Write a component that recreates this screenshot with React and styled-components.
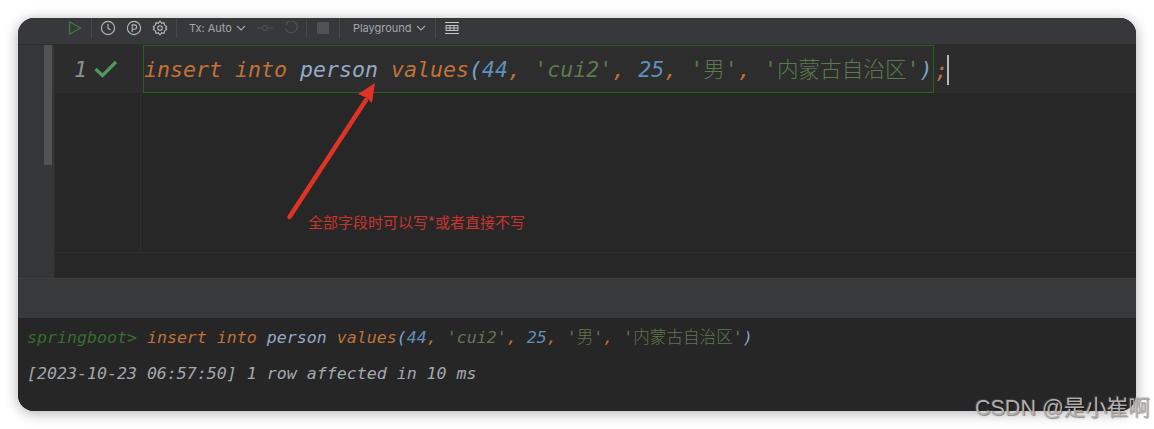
import React from "react";
import styled, { createGlobalStyle } from "styled-components";

const GlobalStyle = createGlobalStyle`
  html, body {
    margin: 0;
    background: #fff;
  }
`;

const MONO = `"DejaVu Sans Mono", "Noto Sans CJK SC", monospace`;

const Page = styled.div`
  position: relative;
  width: 1154px;
  height: 429px;
  padding: 18px;
  box-sizing: border-box;
  overflow: hidden;
  background: #fff;
`;

const Win = styled.div`
  position: relative;
  height: 393px;
  border-radius: 16px;
  overflow: hidden;
  display: flex;
  flex-direction: column;
  background: #262626;
  box-shadow: 0 2px 14px rgba(0, 0, 0, 0.32);
`;

const Toolbar = styled.div`
  height: 26px;
  flex: none;
  display: flex;
  align-items: center;
  padding: 0 0 6px 49px;
  box-sizing: border-box;
  background: #37383b;
  color: #a0a7ae;
  font: 11px "Inter", "Noto Sans", sans-serif;
`;

const Divider = styled.span`
  width: 1px;
  height: 20px;
  flex: none;
  background: #47484b;
  margin: ${(p) => p.$m || "0 9px"};
`;

const ToolIcon = styled.svg`
  flex: none;
  margin: ${(p) => p.$m || "0"};
  display: block;
`;

const ToolText = styled.span`
  margin: ${(p) => p.$m || "0"};
  white-space: nowrap;
`;

const StopBox = styled.span`
  width: 12px;
  height: 12px;
  flex: none;
  border-radius: 1px;
  background: #505153;
`;

const Editor = styled.div`
  height: 233px;
  flex: none;
  display: flex;
  background: #272727;
  border-top: 1px solid #2e2e30;
`;

const SideStrip = styled.div`
  width: 37px;
  flex: none;
  display: flex;
  justify-content: flex-end;
  padding-right: 2px;
  box-sizing: border-box;
  background: #353638;
  border-right: 1px solid #2d2d2e;
`;

const ScrollThumb = styled.div`
  width: 8px;
  height: 120px;
  background: #515253;
`;

const Code = styled.div`
  flex: 1;
  min-width: 0;
  display: flex;
  flex-direction: column;
`;

const LineRow = styled.div`
  height: 48px;
  flex: none;
  display: flex;
  align-items: center;
  background: #2c2c2c;
  font: italic 21.6px ${MONO};
  white-space: pre;
`;

const Gutter = styled.div`
  width: 86px;
  flex: none;
  display: flex;
  align-items: center;
  padding-left: 19px;
  box-sizing: border-box;
  color: #8d9092;
`;

const Check = styled.svg`
  margin-left: 7px;
  flex: none;
`;

const Statement = styled.div`
  height: 48px;
  width: 791px;
  margin-left: 2px;
  flex: none;
  line-height: 48px;
  box-sizing: border-box;
  border: 1px solid #26601e;
  background: #2c2d2c;
`;

const After = styled.div`
  display: flex;
  align-items: center;
  height: 48px;
  padding: 2px 0 0 1px;
  box-sizing: border-box;
`;

const Caret = styled.span`
  width: 2px;
  height: 30px;
  background: #b9b9b9;
  margin-left: -1px;
`;

const Rest = styled.div`
  height: 160px;
  flex: none;
  display: flex;
  border-bottom: 1px solid #313132;
  box-sizing: border-box;
`;

const RestGutter = styled.div`
  width: 86px;
  box-sizing: border-box;
  border-right: 1px solid #303031;
`;

const Tok = styled.span`
  color: ${(p) => p.$c};
  font-style: ${(p) => (p.$upright ? "normal" : "inherit")};
  font-weight: ${(p) => (p.$upright ? 300 : "inherit")};
`;

const Panel = styled.div`
  height: 40px;
  flex: none;
  background: #38393b;
  border-top: 1px solid #3e3f41;
  box-sizing: border-box;
`;

const Console = styled.div`
  flex: 1;
  display: flex;
  flex-direction: column;
  padding: 10px 0 0 9px;
  background: #262626;
  font: italic 16.6px ${MONO};
  white-space: pre;
`;

const ConsoleLine = styled.div`
  height: 36px;
  line-height: 20px;
  color: ${(p) => p.$c || "inherit"};
`;

const ArrowSvg = styled.svg`
  position: absolute;
  left: 270px;
  top: 70px;
`;

const Note = styled.div`
  position: absolute;
  left: 308px;
  top: 212px;
  color: #c8352c;
  font: 15px/20px "Noto Sans CJK SC", sans-serif;
  white-space: nowrap;
`;

const Watermark = styled.div`
  position: absolute;
  left: 975px;
  top: 394px;
  color: #b0b0b0;
  font: 21.5px/28px "Liberation Sans", "Noto Sans CJK SC", sans-serif;
  text-shadow: 1px 1px 1px rgba(0, 0, 0, 0.4), -1px -1px 0 rgba(255, 255, 255, 0.12);
  white-space: nowrap;
`;

const KEY = "#c07238";
const NAME = "#94a9c6";
const NUM = "#5f8fbd";
const STR = "#5b7a4e";
const PUNCT = "#c07238";
const PAREN = "#7aa2cf";

const Sql = () => (
  <>
    <Tok $c={KEY}>insert into</Tok> <Tok $c={NAME}>person</Tok> <Tok $c={KEY}>values</Tok>
    <Tok $c={PAREN}>(</Tok>
    <Tok $c={NUM}>44</Tok>
    <Tok $c={PUNCT}>,</Tok> <Tok $c={STR}>'cui2'</Tok>
    <Tok $c={PUNCT}>,</Tok> <Tok $c={NUM}>25</Tok>
    <Tok $c={PUNCT}>,</Tok> <Tok $c={STR}>'</Tok>
    <Tok $c={STR} $upright>男</Tok>
    <Tok $c={STR}>'</Tok>
    <Tok $c={PUNCT}>,</Tok> <Tok $c={STR}>'</Tok>
    <Tok $c={STR} $upright>内蒙古自治区</Tok>
    <Tok $c={STR}>'</Tok>
    <Tok $c={PAREN}>)</Tok>
  </>
);

const Chevron = ({ m }) => (
  <ToolIcon $m={m} width="10" height="6" viewBox="0 0 10 6" fill="none" stroke="#a0a7ae" strokeWidth="1.1">
    <path d="M1 1l4 4 4-4" />
  </ToolIcon>
);

const App = () => (
  <Page>
    <GlobalStyle />
    <Win>
      <Toolbar>
        <ToolIcon width="16" height="16" viewBox="0 0 16 16" fill="none" stroke="#3d7d3f" strokeWidth="1.3">
          <path d="M2.5 1.8v12.4l11-6.2z" />
        </ToolIcon>
        <Divider $m="0 8px 0 8px" />
        <ToolIcon width="16" height="16" viewBox="0 0 16 16" fill="none" stroke="#b4b8bc" strokeWidth="1.1">
          <circle cx="8" cy="8" r="6.6" />
          <path d="M8 4v4.2l2.6 1.8" />
        </ToolIcon>
        <ToolIcon $m="0 0 0 10px" width="16" height="16" viewBox="0 0 16 16" fill="none" stroke="#b4b8bc" strokeWidth="1.1">
          <circle cx="8" cy="8" r="6.6" />
          <path d="M6.2 12V4.9h2.2a2 2 0 010 4.4H6.2" />
        </ToolIcon>
        <ToolIcon $m="0 0 0 10px" width="16" height="16" viewBox="0 0 16 16" fill="none" stroke="#b4b8bc" strokeWidth="1.1">
          <path d="M8 1.2l1.6 1.9 2.5-.2.6 2.4 2 1.5-1.1 1.2 1.1 1.2-2 1.5-.6 2.4-2.5-.2L8 14.8l-1.6-1.9-2.5.2-.6-2.4-2-1.5L2.4 8 1.3 6.8l2-1.5.6-2.4 2.5.2z" />
          <circle cx="8" cy="8" r="2.3" />
        </ToolIcon>
        <Divider $m="0 12px 0 8px" />
        <ToolText>Tx: Auto</ToolText>
        <Chevron m="0 0 0 4px" />
        <ToolIcon $m="0 0 0 11px" width="16" height="8" viewBox="0 0 16 8" fill="none" stroke="#4f5052" strokeWidth="1.1">
          <circle cx="8" cy="4" r="2.4" />
          <path d="M0 4h5.5M10.5 4H16" />
        </ToolIcon>
        <ToolIcon $m="0 0 0 11px" width="14" height="14" viewBox="0 0 14 14" fill="none" stroke="#4f5052" strokeWidth="1.2">
          <path d="M3 1.5a6 6 0 11-1.6 6" />
          <path d="M1.5 1l2 .6-.6 2.6" />
        </ToolIcon>
        <Divider $m="0 10px 0 8px" />
        <StopBox />
        <Divider $m="0 13px 0 10px" />
        <ToolText>Playground</ToolText>
        <Chevron m="0 0 0 4px" />
        <Divider $m="0 9px 0 9px" />
        <ToolIcon width="14" height="12" viewBox="0 0 14 12" fill="none" stroke="#c3c6c9" strokeWidth="1">
          <path d="M0 .5h14M0 11.5h14M1 3.5h12v5H1zM1 6h12M5 3.5v5M9 3.5v5" />
        </ToolIcon>
      </Toolbar>

      <Editor>
        <SideStrip>
          <ScrollThumb />
        </SideStrip>
        <Code>
          <LineRow>
            <Gutter>
              1
              <Check width="24" height="18" viewBox="0 0 24 18" fill="none" stroke="#4f9a5a" strokeWidth="3.2">
                <path d="M1.5 9l7 6.5L22 2" />
              </Check>
            </Gutter>
            <Statement>
              <Sql />
            </Statement>
            <After>
              <Tok $c={PUNCT}>;</Tok>
              <Caret />
            </After>
          </LineRow>
          <Rest>
            <RestGutter />
          </Rest>
        </Code>
      </Editor>

      <Panel />

      <Console>
        <ConsoleLine>
          <Tok $c="#356f2c">springboot&gt;</Tok> <Sql />
        </ConsoleLine>
        <ConsoleLine $c="#a3a9af">[2023-10-23 06:57:50] 1 row affected in 10 ms</ConsoleLine>
      </Console>
    </Win>

    <ArrowSvg width="120" height="160" viewBox="0 0 120 160" fill="none">
      <path d="M19.5 147L96 30" stroke="#df3325" strokeWidth="4.5" strokeLinecap="round" />
      <path d="M105 13L102 33L97 28L88 24z" fill="#df3325" />
    </ArrowSvg>
    <Note>全部字段时可以写*或者直接不写</Note>
    <Watermark>CSDN @是小崔啊</Watermark>
  </Page>
);

export default App;
